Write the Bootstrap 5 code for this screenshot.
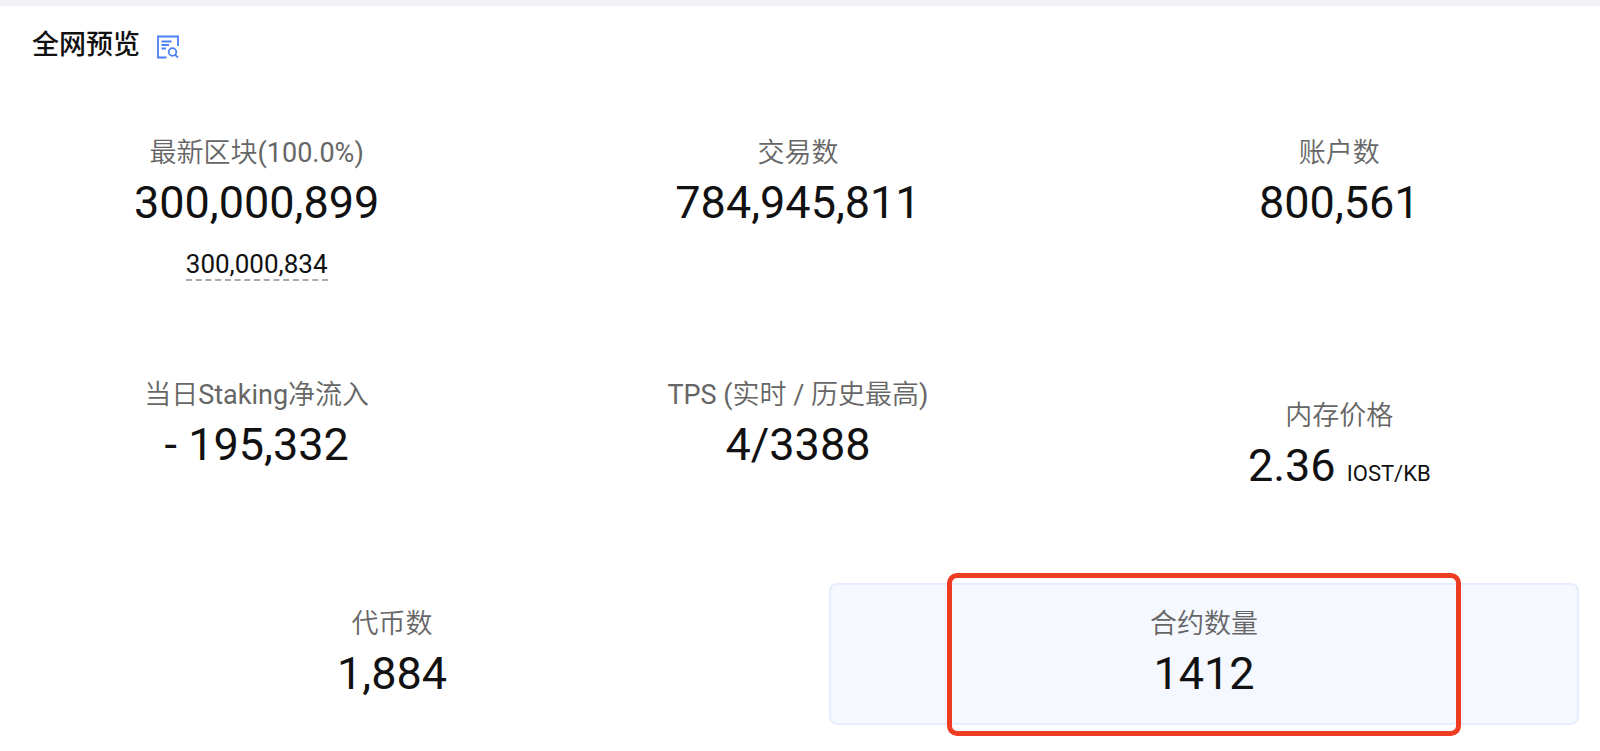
<!DOCTYPE html>
<html lang="zh-CN">
<head>
<meta charset="utf-8">
<meta name="viewport" content="width=device-width, initial-scale=1">
<title>全网预览</title>
<link href="https://cdn.jsdelivr.net/npm/bootstrap@5.3.0/dist/css/bootstrap.min.css" rel="stylesheet">
<style>
body{font-family:Roboto,"Noto Sans CJK SC",sans-serif;color:#111;background:#fff;border-top:6px solid #f1f2f7}
.overview-head{padding:20px 32px 50px}
.overview-head h1{font-size:27px;line-height:38px;font-weight:500}
.stat-list{padding:0 21px 24px 17px;margin-top:-2px}
.stat-row{column-gap:62px}
.row-upper{padding-bottom:50px}
.row-middle{padding-bottom:45px}
.stat-tile{flex:1 1 0;border:2px solid transparent;border-radius:8px;padding:21px 0 17px}
.stat-label{font-family:Roboto,"Noto Sans CJK SC DemiLight","Noto Sans CJK SC",sans-serif;font-size:27px;line-height:36px;color:#666}
.stat-value{font-size:45px;line-height:64px}
.stat-sub{font-size:26px;line-height:30px;color:#111;text-decoration:none;border-bottom:2px dashed #aaa}
.stat-unit{font-size:22px;line-height:24px}
.sub-slot{height:42px;padding-top:14px}
.stat-tile.active{background:#f5f8ff;border-color:#e6edfe}
.highlight-box{top:-12px;bottom:-13px;left:15.6%;right:15.6%;border:5px solid #ee3c22;border-radius:10px}
</style>
</head>
<body>
<main>
<header class="overview-head d-flex align-items-center">
<h1 class="m-0">全网预览</h1>
<a href="#" class="d-flex ms-3 mt-1" aria-label="查看详情">
<svg width="24" height="24" viewBox="0 0 24 24" fill="none" stroke="#4a80f0" stroke-width="1.8"><path d="M10.500 22.500H2V1.500H22V11"/><path d="M5.500 6.500H15.500M5.500 10H13M5.500 13.500H10"/><circle cx="16.500" cy="17" r="3.800"/><path d="M19.200 19.800L22 22.600"/></svg>
</a>
</header>
<div class="stat-list text-center">
<section class="stat-row row-upper d-flex align-items-start">
<div class="stat-tile"><div class="stat-label">最新区块(100.0%)</div><div class="stat-value">300,000,899</div><div class="sub-slot mb-2"><a class="stat-sub d-inline-block" href="#">300,000,834</a></div></div>
<div class="stat-tile"><div class="stat-label">交易数</div><div class="stat-value">784,945,811</div></div>
<div class="stat-tile"><div class="stat-label">账户数</div><div class="stat-value">800,561</div></div>
</section>
<section class="stat-row row-middle d-flex align-items-center">
<div class="stat-tile"><div class="stat-label">当日Staking净流入</div><div class="stat-value">- 195,332</div><div class="sub-slot"></div></div>
<div class="stat-tile"><div class="stat-label">TPS (实时 / 历史最高)</div><div class="stat-value">4/3388</div><div class="sub-slot"></div></div>
<div class="stat-tile"><div class="stat-label">内存价格</div><div class="stat-value">2.36 <span class="stat-unit">IOST/KB</span></div></div>
</section>
<section class="stat-row d-flex">
<div class="stat-tile"><div class="stat-label">代币数</div><div class="stat-value">1,884</div></div>
<div class="stat-tile active position-relative"><div class="stat-label">合约数量</div><div class="stat-value">1412</div><div class="highlight-box position-absolute"></div></div>
</section>
</div>
</main>
<script src="https://cdn.jsdelivr.net/npm/bootstrap@5.3.0/dist/js/bootstrap.bundle.min.js"></script>
</body>
</html>
